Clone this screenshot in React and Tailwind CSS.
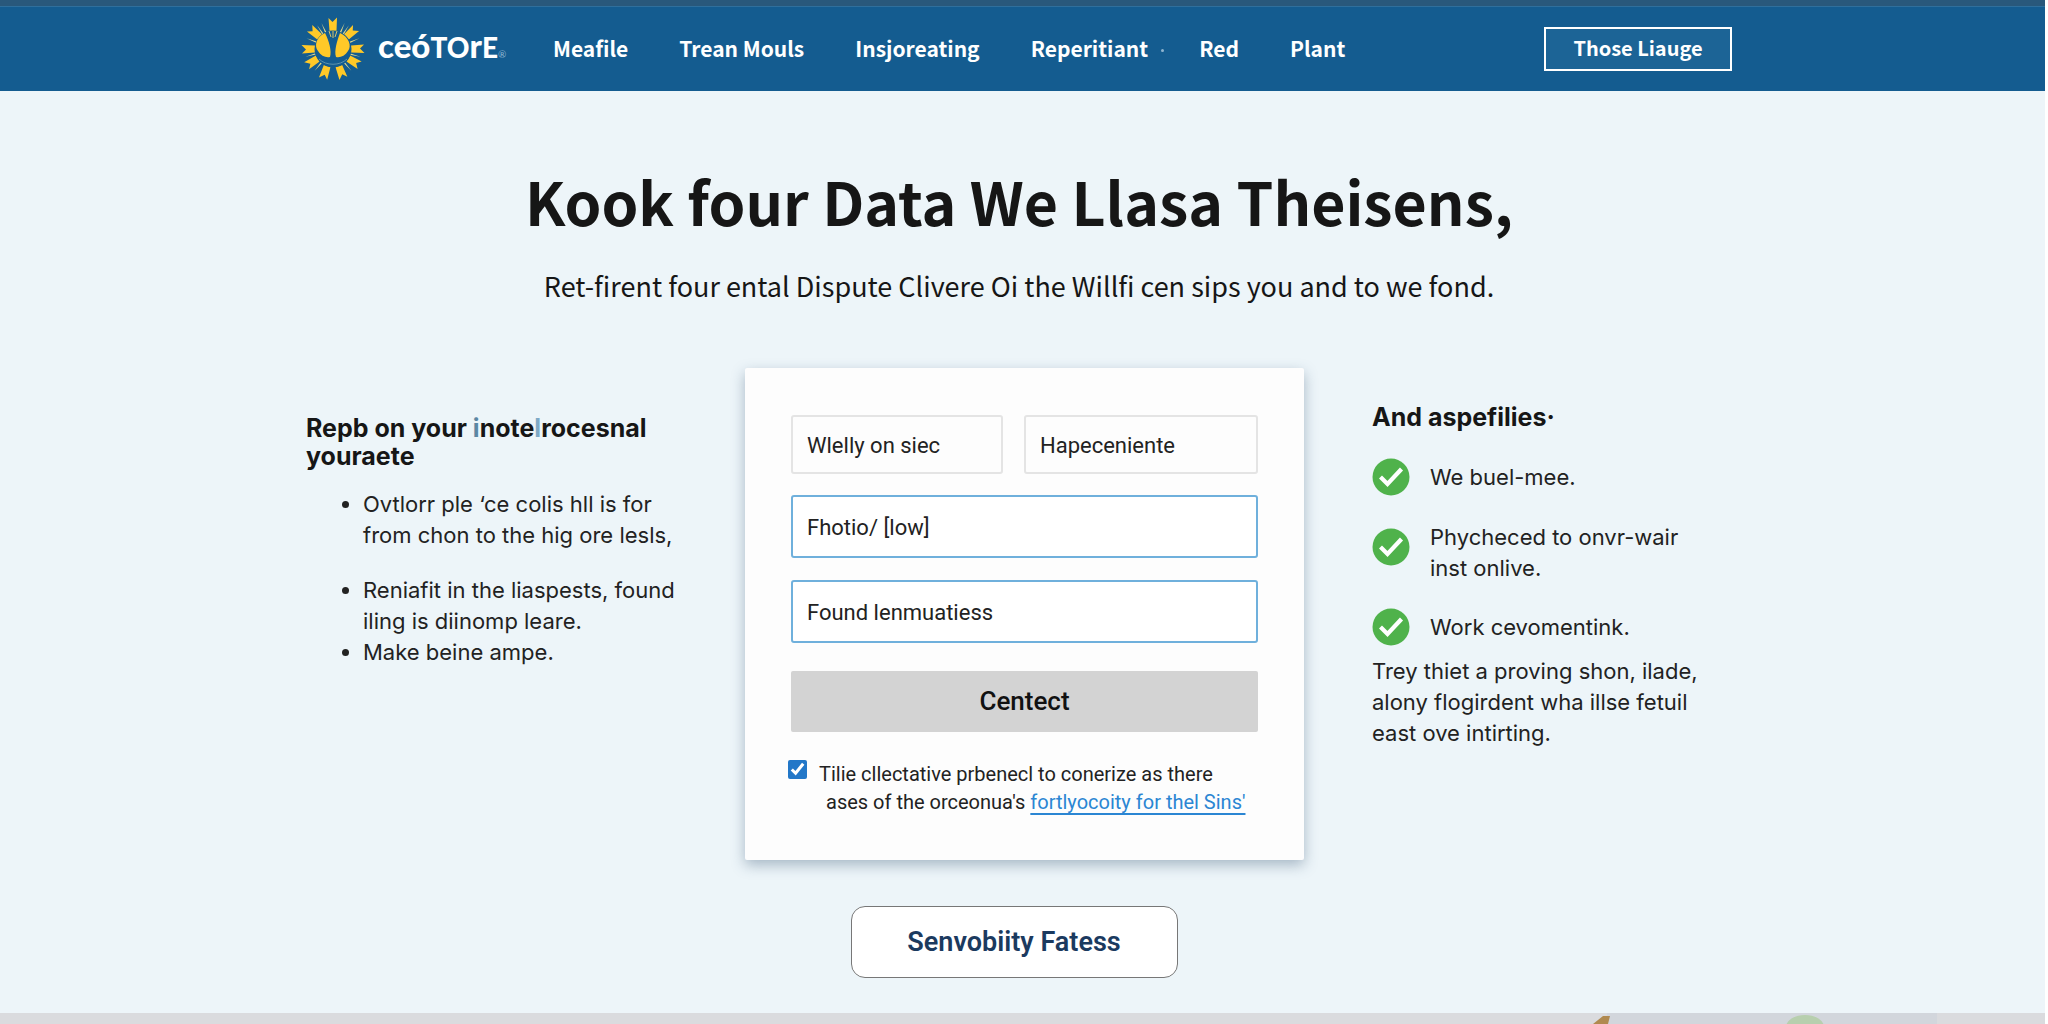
const navLinks = ['Meafile', 'Trean Mouls', 'Insjoreating', 'Reperitiant', 'Red', 'Plant']

const tips = [
  { text: ['Ovtlorr ple ‘ce colis hll is for', 'from chon to the hig ore lesls,'], className: 'mb-[24px]' },
  { text: ['Reniafit in the liaspests, found', 'iling is diinomp leare.'], className: '' },
  { text: ['Make beine ampe.'], className: '' },
]

const benefits = [
  { text: ['We buel-mee.'], className: 'mb-[26px] items-center' },
  { text: ['Phycheced to onvr-wair', 'inst onlive.'], className: 'mb-[24px] items-start', iconClassName: 'mt-[6px]' },
  { text: ['Work cevomentink.'], className: 'mb-[10px] items-center' },
]

const rays = [0, 48, 90, 122, 161, 199, 238, 270, 312]
const thinRays = [24, 34, 68, 106, 140, 220, 254, 292, 326, 336]

function SunLogo() {
  return (
    <svg viewBox="0 0 66 66" className="h-[66px] w-[66px] shrink-0" aria-hidden="true">
      {thinRays.map((angle) => (
        <path key={angle} d="M31.400 15 L32 4.500 L32.800 15 Z" fill="#e6dc8c" transform={`rotate(${angle} 32 33)`} />
      ))}
      {rays.map((angle) => (
        <path
          key={angle}
          d="M28.500 15 L27.500 2 L31.500 6 L36 1.500 L35.500 15 Z"
          fill="#ffc928"
          transform={`rotate(${angle} 32 33)`}
        />
      ))}
      <circle cx="32" cy="33" r="18.500" fill="#145c90" />
      <path d="M24 17 C15 21 13 30 17 35 C20 40 25 42 29 41 C31 35 28 25 24 17 Z" fill="#ffc928" />
      <path d="M39 17 C48 21 51 30 47 35 C44 40 39 42 35 41 C33 35 36 25 39 17 Z" fill="#ffc928" />
      <path d="M28 15 L30 21 M32 15 L32 22 M36 15 L34 21" stroke="#d8c46a" strokeWidth="1" fill="none" />
      <path d="M18 43 C25 50 39 50 46 43" stroke="#5b93ad" strokeWidth="1" fill="none" />
    </svg>
  )
}

function CheckIcon({ className = '' }) {
  return (
    <svg viewBox="0 0 38 38" className={`h-[38px] w-[38px] shrink-0 ${className}`} aria-hidden="true">
      <circle cx="19" cy="19" r="18.500" fill="#4fb24b" />
      <path d="M8.500 19 L15.500 26 L29.500 11" fill="none" stroke="#fff" strokeWidth="4.200" />
    </svg>
  )
}

function Field({ value, className }) {
  return (
    <input
      type="text"
      aria-label={value}
      defaultValue={value}
      className={`min-w-0 rounded-[3px] px-[14px] pt-[2px] text-[22px] text-[#222] outline-none ${className}`}
    />
  )
}

function Header() {
  return (
    <header className="border-t-[6px] border-[#29587b] bg-[#145c90] font-['Noto_Sans_CJK_SC',sans-serif] text-white">
      <div className="border-t border-[#2f6f9c]">
        <div className="mx-auto flex h-[84px] max-w-[1443px] items-center pr-[12px]">
          <a href="#home" className="flex w-[252px] items-center gap-[11px]">
            <SunLogo />
            <span className="flex items-baseline font-['Lato',sans-serif] text-[28px] leading-[40px] font-black">
              <span className="text-[33px]">ceó</span>TO<span className="text-[33px]">r</span>E
              <span className="text-[10px] font-normal text-[#8fb5d0]">®</span>
            </span>
          </a>
          <nav className="flex items-center gap-[51px] pb-[2px] text-[21px] leading-[32px] font-bold">
            {navLinks.map((link) => (
              <a key={link} href={`#${link}`} className="relative whitespace-nowrap">
                {link}
                {link === 'Reperitiant' && (
                  <span className="absolute top-[17px] left-full ml-[13px] h-[3px] w-[3px] rounded-full bg-[#8fb5d0]" />
                )}
              </a>
            ))}
          </nav>
          <button
            type="button"
            className="ml-auto h-[44px] w-[188px] border-2 border-white bg-[#1c6496] pb-[3px] text-[20px] leading-[32px] font-bold"
          >
            Those Liauge
          </button>
        </div>
      </div>
    </header>
  )
}

function SignupCard() {
  return (
    <form className="w-[559px] shrink-0 rounded-[2px] bg-[#fdfdfd] px-[46px] pt-[47px] pb-[44px] font-['Roboto',sans-serif] shadow-[0_5px_14px_rgba(60,90,120,0.4)]">
      <div className="flex gap-[21px]">
        <Field value="Wlelly on siec" className="h-[59px] w-[212px] border-2 border-[#e4e4e4]" />
        <Field value="Hapeceniente" className="h-[59px] flex-1 border-2 border-[#e4e4e4]" />
      </div>
      <Field value="Fhotio/ [low]" className="mt-[21px] h-[63px] w-full border-2 border-[#6fb0dc] bg-white" />
      <Field value="Found lenmuatiess" className="mt-[22px] h-[63px] w-full border-2 border-[#6fb0dc] bg-white" />
      <button type="button" className="mt-[28px] h-[61px] w-full rounded-[2px] bg-[#d3d3d3] text-[26px] font-medium text-[#111]">
        Centect
      </button>
      <div className="mt-[28px] -ml-[3px] flex items-start gap-[12px]">
        <input id="terms" type="checkbox" defaultChecked className="h-[19px] w-[19px] shrink-0 accent-[#2277c8]" />
        <label htmlFor="terms" className="pl-[7px] -indent-[7px] text-[20px] leading-[28px] whitespace-nowrap text-[#222]">
          Tilie cllectative prbenecl to conerize as there
          <span className="block indent-0">
            ases of the orceonua's{' '}
            <a href="#terms" className="text-[#2b86d3] underline underline-offset-4">fortlyocoity for thel Sins'</a>
          </span>
        </label>
      </div>
    </form>
  )
}

export default function App() {
  return (
    <div className="flex min-h-screen flex-col border-r-[3px] border-white bg-[#edf5f9] text-[#161616]">
      <Header />
      <main className="mx-auto w-full max-w-[1443px] flex-1 pr-[7px] pb-[34px]">
        <div className="text-center font-['Noto_Sans_CJK_SC',sans-serif]">
          <h1 className="pt-[72px] text-[59px] leading-[76px] font-bold">Kook four Data We Llasa Theisens,</h1>
          <p className="mt-[27px] text-[27px] leading-[40px]">
            Ret-firent four ental Dispute Clivere Oi the Willfi cen sips you and to we fond.
          </p>
        </div>

        <div className="mt-[62px] flex items-start gap-[68px] pl-[5px] font-['Inter',sans-serif] text-[22px] leading-[31px]">
          <section className="w-[371px] shrink-0 pt-[46px]">
            <h2 className="text-[25px] leading-[28px] font-bold whitespace-nowrap">
              Repb on your <span className="text-[#5b87a3]">i</span>note<span className="text-[#7fa9c6]">l</span>rocesnal
              <br />
              youraete
            </h2>
            <ul className="mt-[19px] list-disc pl-[57px] text-[#222]">
              {tips.map((tip) => (
                <li key={tip.text[0]} className={tip.className}>
                  {tip.text.map((line) => (
                    <span key={line} className="block whitespace-nowrap">{line}</span>
                  ))}
                </li>
              ))}
            </ul>
          </section>

          <SignupCard />

          <section className="flex-1 pt-[33px]">
            <h2 className="text-[25px] leading-[32px] font-bold">And aspefilies·</h2>
            <ul className="mt-[25px] text-[#222]">
              {benefits.map((benefit) => (
                <li key={benefit.text[0]} className={`flex gap-[20px] ${benefit.className}`}>
                  <CheckIcon className={benefit.iconClassName} />
                  <span>
                    {benefit.text.map((line) => (
                      <span key={line} className="block whitespace-nowrap">{line}</span>
                    ))}
                  </span>
                </li>
              ))}
            </ul>
            <p className="whitespace-nowrap text-[#222]">
              Trey thiet a proving shon, ilade,
              <br />
              alony flogirdent wha illse fetuil
              <br />
              east ove intirting.
            </p>
          </section>
        </div>

        <div className="mt-[46px] flex justify-center pr-[10px]">
          <button
            type="button"
            className="h-[72px] w-[327px] rounded-[14px] border border-[#777] bg-white font-['Roboto',sans-serif] text-[27px] font-semibold text-[#1b3a5f]"
          >
            Senvobiity Fatess
          </button>
        </div>
      </main>
      <footer className="flex h-[11px] justify-end overflow-hidden bg-[#dadbde]">
        <svg viewBox="0 0 548 11" className="h-[11px] w-[548px]" aria-hidden="true">
          <rect width="440" height="11" fill="#d2d6dc" />
          <rect width="110" height="11" fill="#dadbde" />
          <path d="M96 11 L106 3 L113 3 L111 11 Z" fill="#b08a50" />
          <ellipse cx="308" cy="14" rx="19" ry="12" fill="#b7cfae" />
        </svg>
      </footer>
    </div>
  )
}
